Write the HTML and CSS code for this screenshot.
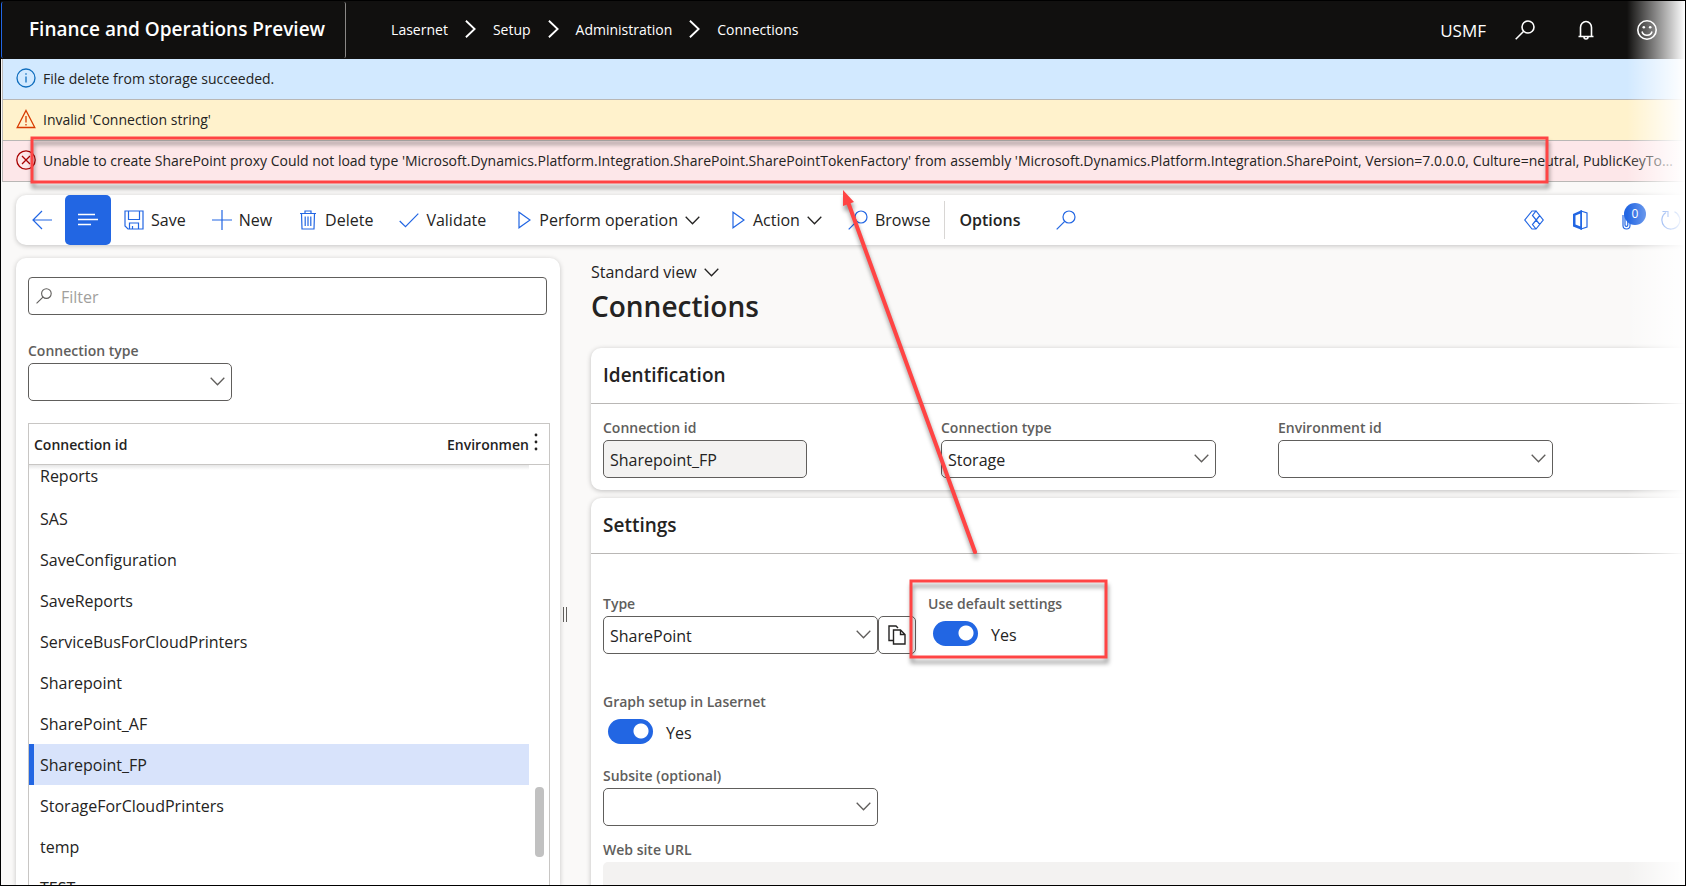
FILE: index.html
```html
<!DOCTYPE html>
<html lang="en">

<head>
    <meta charset="UTF-8">
    <meta name="viewport" content="width=device-width, initial-scale=1.0">
    <title>Connections -- Finance and Operations Preview</title>
    <link rel="stylesheet" href="styles.css">
</head>

<body>
    <!-- shared icons -->
    <svg class="icon-defs" aria-hidden="true">
        <symbol id="icon-search" viewBox="0 0 20 20">
            <circle cx="13" cy="7" r="6" />
            <path d="M8.7 11.3L0.7 19.3" />
        </symbol>
        <symbol id="icon-chevron" viewBox="0 0 15 9">
            <path d="M0.7 0.7L7.5 7.7L14.3 0.7" />
        </symbol>
        <symbol id="icon-crumb" viewBox="0 0 12 20">
            <path d="M1 1L10.5 10L1 19" />
        </symbol>
        <symbol id="icon-play" viewBox="0 0 13 18">
            <path d="M1 1.2V16.8L12 9Z" />
        </symbol>
    </svg>

    <div class="app">
        <header class="top-bar">
            <div class="app-name">Finance and Operations Preview</div>
            <nav class="breadcrumb">
                <a href="#">Lasernet</a>
                <svg class="crumb-arrow"><use href="#icon-crumb" /></svg>
                <a href="#">Setup</a>
                <svg class="crumb-arrow"><use href="#icon-crumb" /></svg>
                <a href="#">Administration</a>
                <svg class="crumb-arrow"><use href="#icon-crumb" /></svg>
                <a href="#">Connections</a>
            </nav>
            <div class="top-actions">
                <button class="company">USMF</button>
                <button aria-label="Search"><svg class="icon"><use href="#icon-search" /></svg></button>
                <button aria-label="Notifications">
                    <svg class="icon" viewBox="0 0 20 20">
                        <path d="M2.5 16.5H17.5M4.5 16.5V7.5A5.5 6 0 0 1 15.5 7.5V16.5M8 17A2 2 0 0 0 12 17" />
                    </svg>
                </button>
                <button aria-label="Feedback">
                    <svg class="icon" viewBox="0 0 20 20">
                        <circle cx="10" cy="10" r="9.2" />
                        <path d="M5 11.5A5.2 5.2 0 0 0 15 11.5" />
                        <circle class="dot" cx="6.8" cy="7.3" r="1.3" />
                        <circle class="dot" cx="13.2" cy="7.3" r="1.3" />
                    </svg>
                </button>
            </div>
        </header>

        <div class="message message-info">
            <svg class="message-icon" viewBox="0 0 20 20">
                <circle cx="10" cy="10" r="9" />
                <path d="M10 8.5V14.5M10 5.2V6.8" />
            </svg>
            <span>File delete from storage succeeded.</span>
        </div>
        <div class="message message-warning">
            <svg class="message-icon" viewBox="0 0 20 20">
                <path d="M10 1.5L18.8 18.5H1.2Z" />
                <path d="M10 7V13.5M10 15V16.6" />
            </svg>
            <span>Invalid 'Connection string'</span>
        </div>
        <div class="message message-error">
            <svg class="message-icon" viewBox="0 0 20 20">
                <circle cx="10" cy="10" r="9.2" />
                <path d="M6 6L14 14M14 6L6 14" />
            </svg>
            <span>Unable to create SharePoint proxy Could not load type 'Microsoft.Dynamics.Platform.Integration.SharePoint.SharePointTokenFactory' from assembly 'Microsoft.Dynamics.Platform.Integration.SharePoint, Version=7.0.0.0, Culture=neutral, PublicKeyToken=31bf3856ad364e35'</span>
        </div>

        <div class="action-pane">
            <button class="btn-back" aria-label="Back">
                <svg class="icon" viewBox="0 0 20 20">
                    <path d="M20 10H1M10 1L1 10L10 19" />
                </svg>
            </button>
            <button class="btn-list" aria-label="Show list">
                <svg class="icon" viewBox="0 0 20 20">
                    <path d="M0 4.5H17M0 9.5H20M0 14.5H13" />
                </svg>
            </button>
            <button class="action">
                <svg class="icon" viewBox="0 0 20 20">
                    <path d="M1 1H19V19H4L1 16ZM4.5 1V9.5H15.5V1M5.5 19V13H14.5V19M8.5 16V19" />
                </svg>
                Save
            </button>
            <button class="action">
                <svg class="icon" viewBox="0 0 20 20">
                    <path d="M10 0V20M0 10H20" />
                </svg>
                New
            </button>
            <button class="action">
                <svg class="icon" viewBox="0 0 20 20">
                    <path d="M2 3.5H18M7 3.5V1H13V3.5M3.5 3.5L4 19H16L16.5 3.5M7.2 6.5V16M10 6.5V16M12.8 6.5V16" />
                </svg>
                Delete
            </button>
            <button class="action">
                <svg class="icon" viewBox="0 0 20 20">
                    <path d="M0.7 11L6.5 16.7L19.3 3.7" />
                </svg>
                Validate
            </button>
            <button class="action">
                <svg class="icon-play"><use href="#icon-play" /></svg>
                Perform operation
                <svg class="chevron"><use href="#icon-chevron" /></svg>
            </button>
            <button class="action">
                <svg class="icon-play"><use href="#icon-play" /></svg>
                Action
                <svg class="chevron"><use href="#icon-chevron" /></svg>
            </button>
            <button class="action action-last">
                <svg class="icon"><use href="#icon-search" /></svg>
                Browse
            </button>
            <button class="action-tab">Options</button>
            <button class="btn-find" aria-label="Search actions"><svg class="icon"><use href="#icon-search" /></svg></button>
            <div class="pane-icons">
                <button aria-label="Power Apps">
                    <svg class="icon" viewBox="0 0 20 20">
                        <path d="M12 1H8L0.8 10L8 19H12L19.2 10L12 1L8.5 5.5L15.8 14.5M12 19L8.5 14.5L15.8 5.5" />
                    </svg>
                </button>
                <button aria-label="Open in Microsoft Office">
                    <svg class="icon" viewBox="0 0 20 20">
                        <path d="M11 1L17 3V17L11 19Z" />
                        <path class="fill" d="M12 0V20L3 16.5V4L12 0ZM10.5 3.5L5.5 5.5V14.5L10.5 16.5Z" />
                    </svg>
                </button>
                <button class="btn-attach" aria-label="Attachments">
                    <svg class="icon" viewBox="0 0 20 20">
                        <path d="M3 5V15.5A3.5 3.5 0 0 0 10 15.5V4A2.5 2.5 0 0 0 5 4V15A1.4 1.4 0 0 0 7.8 15V6" />
                    </svg>
                    <span class="badge">0</span>
                </button>
                <button aria-label="Refresh">
                    <svg class="icon" viewBox="0 0 20 20">
                        <path d="M13.5 1.8A9 9 0 1 1 5 2.5M1.5 1.5H7V7" />
                    </svg>
                </button>
            </div>
        </div>

        <div class="workspace">
            <aside class="list-panel">
                <div class="filter-box">
                    <svg class="filter-icon"><use href="#icon-search" /></svg>
                    <input type="text" id="filter" placeholder="Filter" aria-label="Filter">
                </div>
                <div class="field field-small list-type">
                    <label for="list-type">Connection type</label>
                    <div class="select-box">
                        <select id="list-type">
                            <option></option>
                        </select>
                        <svg class="chevron"><use href="#icon-chevron" /></svg>
                    </div>
                </div>
                <div class="grid">
                    <table>
                        <thead>
                            <tr>
                                <th>Connection id</th>
                                <th class="col-env">Environment id</th>
                                <th class="col-menu">
                                    <button aria-label="Grid options">
                                        <svg viewBox="0 0 4 18">
                                            <circle cx="2" cy="2" r="1.4" />
                                            <circle cx="2" cy="9" r="1.4" />
                                            <circle cx="2" cy="16" r="1.4" />
                                        </svg>
                                    </button>
                                </th>
                            </tr>
                        </thead>
                        <tbody>
                            <tr class="row-cut"><td>Reports</td><td></td></tr>
                            <tr><td>SAS</td><td></td></tr>
                            <tr><td>SaveConfiguration</td><td></td></tr>
                            <tr><td>SaveReports</td><td></td></tr>
                            <tr><td>ServiceBusForCloudPrinters</td><td></td></tr>
                            <tr><td>Sharepoint</td><td></td></tr>
                            <tr><td>SharePoint_AF</td><td></td></tr>
                            <tr class="selected"><td>Sharepoint_FP</td><td></td></tr>
                            <tr><td>StorageForCloudPrinters</td><td></td></tr>
                            <tr><td>temp</td><td></td></tr>
                            <tr><td>TEST</td><td></td></tr>
                        </tbody>
                    </table>
                    <div class="scroll-thumb"></div>
                </div>
            </aside>

            <div class="splitter"></div>

            <main class="details">
                <button class="view-picker">
                    Standard view
                    <svg class="chevron"><use href="#icon-chevron" /></svg>
                </button>
                <h1>Connections</h1>

                <section class="card">
                    <h2>Identification</h2>
                    <div class="card-body identification">
                        <div class="field field-small">
                            <label for="connection-id">Connection id</label>
                            <input type="text" id="connection-id" value="Sharepoint_FP" readonly>
                        </div>
                        <div class="field">
                            <label for="connection-type">Connection type</label>
                            <div class="select-box">
                                <select id="connection-type">
                                    <option>Storage</option>
                                </select>
                                <svg class="chevron"><use href="#icon-chevron" /></svg>
                            </div>
                        </div>
                        <div class="field">
                            <label for="environment-id">Environment id</label>
                            <div class="select-box">
                                <select id="environment-id">
                                    <option></option>
                                </select>
                                <svg class="chevron"><use href="#icon-chevron" /></svg>
                            </div>
                        </div>
                    </div>
                </section>

                <section class="card card-settings">
                    <h2>Settings</h2>
                    <div class="card-body">
                        <div class="type-row">
                            <div class="field">
                                <label for="type">Type</label>
                                <div class="select-box">
                                    <select id="type">
                                        <option>SharePoint</option>
                                    </select>
                                    <svg class="chevron"><use href="#icon-chevron" /></svg>
                                </div>
                            </div>
                            <button class="btn-copy" aria-label="Copy">
                                <svg viewBox="0 0 18 20">
                                    <path d="M5 15.5H1V1H8L10 3" />
                                    <path d="M5.5 5H12.5L17 9.5V19H5.5ZM12.5 5V9.5H17" />
                                </svg>
                            </button>
                            <div class="field field-toggle">
                                <label for="use-default">Use default settings</label>
                                <div class="toggle-line">
                                    <input type="checkbox" role="switch" class="toggle" id="use-default" checked>
                                    <span>Yes</span>
                                </div>
                            </div>
                        </div>
                        <div class="field field-toggle graph-setup">
                            <label for="graph-setup">Graph setup in Lasernet</label>
                            <div class="toggle-line">
                                <input type="checkbox" role="switch" class="toggle" id="graph-setup" checked>
                                <span>Yes</span>
                            </div>
                        </div>
                        <div class="field subsite">
                            <label for="subsite">Subsite (optional)</label>
                            <div class="select-box">
                                <select id="subsite">
                                    <option></option>
                                </select>
                                <svg class="chevron"><use href="#icon-chevron" /></svg>
                            </div>
                        </div>
                        <div class="field field-wide">
                            <label for="site-url">Web site URL</label>
                            <input type="text" id="site-url" class="no-border" readonly>
                        </div>
                    </div>
                </section>
            </main>
        </div>

        <div class="edge-fade"></div>

        <!-- call-outs drawn over the page -->
        <svg class="callouts" aria-hidden="true">
            <rect x="31" y="137" width="1515" height="44" />
            <rect x="910" y="580" width="195" height="76" />
            <path class="shaft" d="M974 551L847 201" />
            <path class="head" d="M842 189L853 201L842 205Z" />
        </svg>
    </div>
</body>

</html>
```
FILE: styles.css
```css
* {
    box-sizing: border-box;
}

body {
    margin: 0;
    font-family: "Open Sans", "Noto Sans", sans-serif;
    font-size: 16px;
    color: #242322;
    background-color: #faf9f8;
}

button,
input,
select {
    font: inherit;
    color: inherit;
}

button {
    padding: 0;
    border: none;
    background: none;
    cursor: pointer;
}

svg {
    display: block;
    flex: none;
    fill: none;
    stroke: currentColor;
}

.icon-defs {
    position: absolute;
    width: 0;
    height: 0;
}

.icon {
    width: 20px;
    height: 20px;
}

.chevron {
    width: 15px;
    height: 9px;
    stroke-width: 1.3;
}

.app {
    position: relative;
    display: flex;
    flex-direction: column;
    height: 100vh;
    overflow: hidden;
    border: 1px solid #000;
}

/* top bar */
.top-bar {
    display: flex;
    flex: none;
    align-items: center;
    height: 58px;
    padding-right: 28px;
    background-color: #11100f;
    color: #fff;
}

.app-name {
    height: 56px;
    padding: 0 20px 0 27px;
    border-left: 1px solid #2266e3;
    border-right: 1px solid #8a8886;
    border-radius: 2px;
    font-size: 19px;
    font-weight: 600;
    line-height: 55px;
    white-space: nowrap;
}

.breadcrumb {
    display: flex;
    align-items: center;
    gap: 17px;
    padding: 0 0 2px 45px;
    font-size: 14px;
}

.breadcrumb a {
    color: #fff;
    text-decoration: none;
}

.crumb-arrow {
    width: 11px;
    height: 20px;
    stroke-width: 2;
}

.top-actions {
    display: flex;
    align-items: center;
    gap: 41px;
    margin-left: auto;
}

.top-actions .icon {
    stroke-width: 1.6;
}

.company {
    margin-right: -12px;
    font-size: 17px;
}

.dot {
    fill: currentColor;
    stroke: none;
}

/* message bars */
.message {
    display: flex;
    flex: none;
    align-items: center;
    gap: 7px;
    height: 41px;
    margin-left: 1px;
    padding: 0 10px 2px 13px;
    border-left: 1px solid #bdbbb9;
    border-bottom: 1px solid #b9b7b5;
    font-size: 14px;
}

.message span {
    overflow: hidden;
    text-overflow: ellipsis;
    white-space: nowrap;
}

.message-icon {
    width: 20px;
    height: 20px;
    stroke-width: 1.3;
}

.message-info {
    background-color: #d2e9ff;
}

.message-info svg {
    color: #106ebe;
}

.message-warning {
    background-color: #fff2cc;
}

.message-warning svg {
    color: #d83b01;
}

.message-error {
    background-color: #fde7e9;
}

.message-error svg {
    color: #a80000;
}

/* action pane */
.action-pane {
    display: flex;
    flex: none;
    align-items: center;
    height: 50px;
    margin: 13px 0 13px 15px;
    padding-left: 16px;
    border-radius: 10px 0 0 10px;
    background-color: #fff;
    box-shadow: 0 1px 5px rgba(0, 0, 0, 0.22);
}

.action-pane .icon,
.icon-play {
    color: #2266e3;
    stroke-width: 1.2;
}

.icon-play {
    width: 13px;
    height: 18px;
    margin: 0 1px 0 6px;
}

.action-pane .btn-list {
    display: flex;
    align-items: center;
    justify-content: center;
    width: 46px;
    height: 50px;
    margin: 0 13px;
    border-radius: 5px;
    background-color: #2266e3;
}

.action-pane .btn-list .icon {
    color: #fff;
    stroke-width: 1.6;
}

.action {
    display: flex;
    align-items: center;
    gap: 7px;
    margin-right: 26px;
    white-space: nowrap;
}

.action-last {
    margin-right: 0;
}

.action-tab {
    height: 38px;
    margin-left: 14px;
    padding-left: 14px;
    border-left: 1px solid #d8d6d4;
    font-weight: 600;
}

.btn-find {
    margin-left: 36px;
}

.pane-icons {
    display: flex;
    gap: 26px;
    margin-left: auto;
    padding-right: 4px;
}

.fill {
    fill: currentColor;
    fill-rule: evenodd;
    stroke: none;
}

.btn-attach {
    position: relative;
    margin: 0 -5px 0 4px;
}

.badge {
    position: absolute;
    top: -7px;
    left: 4px;
    width: 22px;
    height: 22px;
    border-radius: 11px;
    background-color: #2266e3;
    color: #fff;
    font-size: 12px;
    line-height: 22px;
}

/* workspace */
.workspace {
    display: flex;
    flex: 1;
    min-height: 0;
    margin-left: 15px;
}

.list-panel {
    display: flex;
    flex-direction: column;
    width: 544px;
    padding: 19px 10px 0 12px;
    border-radius: 10px 10px 0 0;
    background-color: #fff;
    box-shadow: 0 1px 5px rgba(0, 0, 0, 0.22);
}

.filter-box {
    display: flex;
    align-items: center;
    height: 38px;
    margin-right: 3px;
    padding-left: 7px;
    border: 1px solid #605e5c;
    border-radius: 4px;
}

.filter-icon {
    width: 16px;
    height: 16px;
    stroke-width: 1.4;
    color: #605e5c;
}

.filter-box input {
    flex: 1;
    margin-left: 9px;
    padding: 2px 0 0;
    border: none;
    outline: none;
}

.filter-box input::placeholder {
    color: #a19f9d;
}

.field {
    display: flex;
    flex-direction: column;
    gap: 2px;
    width: 275px;
}

.field-small {
    width: 204px;
}

.field-wide {
    width: auto;
}

.field label {
    color: #605e5c;
    font-size: 14px;
    font-weight: 600;
    line-height: 20px;
}

.field input[type="text"],
.field select {
    width: 100%;
    height: 38px;
    padding: 1px 6px 0;
    border: 1px solid #605e5c;
    border-radius: 5px;
    background-color: #fff;
    appearance: none;
}

.field input[readonly] {
    background-color: #f3f2f1;
}

.field input.no-border {
    border: none;
}

.select-box {
    position: relative;
}

.select-box .chevron {
    position: absolute;
    top: 14px;
    right: 7px;
    color: #605e5c;
    pointer-events: none;
}

.list-type {
    margin: 26px 0 22px;
}

/* connections grid */
.grid {
    position: relative;
    flex: 1;
    min-height: 0;
    overflow: hidden;
    border: 1px solid #c8c6c4;
    border-bottom: none;
}

table {
    width: 100%;
    border-collapse: collapse;
    table-layout: fixed;
}

thead {
    border-bottom: 1px solid #c8c6c4;
}

th {
    height: 40px;
    padding: 1px 0 0 5px;
    overflow: hidden;
    font-size: 14px;
    font-weight: 600;
    text-align: left;
    white-space: nowrap;
}

th.col-env {
    width: 87px;
}

th.col-menu {
    width: 20px;
}

.col-menu svg {
    width: 4px;
    height: 18px;
    fill: currentColor;
    stroke: none;
}

td {
    height: 41px;
    padding: 0 0 0 11px;
}

/* first visible row, partly scrolled under the header */
.row-cut td {
    height: 34px;
    padding-bottom: 11px;
    background: linear-gradient(rgba(0, 0, 0, 0.1), rgba(0, 0, 0, 0)) no-repeat 0 0 / 100% 5px;
}

.selected td {
    background-color: #d8e3fb;
}

.selected td:first-child {
    box-shadow: inset 5px 0 #2266e3;
}

.scroll-thumb {
    position: absolute;
    top: 363px;
    right: 5px;
    width: 9px;
    height: 70px;
    border-radius: 4px;
    background-color: #c1c1c1;
}

.splitter {
    align-self: flex-start;
    width: 4px;
    height: 15px;
    margin: 349px 24px 0 3px;
    border: solid #605e5c;
    border-width: 0 1px;
}

/* details */
.details {
    display: flex;
    flex: 1;
    flex-direction: column;
    min-width: 0;
}

.view-picker {
    display: flex;
    align-items: center;
    gap: 7px;
    line-height: 28px;
}

h1 {
    margin: 0 0 21px;
    font-size: 28px;
    font-weight: 600;
    line-height: 41px;
}

.card {
    margin-bottom: 8px;
    border-radius: 10px 0 0 10px;
    background-color: #fff;
    box-shadow: 0 1px 5px rgba(0, 0, 0, 0.24);
}

.card-settings {
    flex: 1;
    margin-bottom: 0;
}

h2 {
    margin: 0;
    padding-left: 12px;
    border-bottom: 1px solid #b9b7b5;
    font-size: 19px;
    font-weight: 600;
    line-height: 55px;
}

.card-body {
    padding-left: 12px;
}

.identification {
    display: flex;
    padding-top: 14px;
    padding-bottom: 12px;
}

.identification .field {
    margin-right: 62px;
}

.identification .field-small {
    margin-right: 134px;
}

.type-row {
    display: flex;
    align-items: flex-end;
    padding-top: 40px;
}

.btn-copy {
    display: flex;
    align-items: center;
    justify-content: center;
    width: 38px;
    height: 38px;
    border: 1px solid #605e5c;
    border-radius: 5px;
}

.btn-copy svg {
    width: 18px;
    height: 20px;
    stroke-width: 1.4;
}

.type-row .field-toggle {
    margin-left: 12px;
}

.toggle-line {
    display: flex;
    align-items: center;
    gap: 13px;
    height: 38px;
    padding-left: 5px;
}

.toggle {
    width: 45px;
    height: 25px;
    margin: 0 0 4px;
    border-radius: 13px;
    background: radial-gradient(circle at 33px 12px, #fff 7px, #2266e3 8px);
    appearance: none;
}

.graph-setup {
    margin-top: 38px;
}

.subsite {
    margin: 14px 0;
}

/* page edge fades out to white */
.edge-fade {
    position: absolute;
    top: 0;
    right: 0;
    bottom: 0;
    width: 58px;
    background: linear-gradient(to right, rgba(255, 255, 255, 0), #fff);
    pointer-events: none;
}

.callouts {
    position: absolute;
    top: 0;
    left: 0;
    width: 100%;
    height: 100%;
    stroke: #ff4444;
    stroke-width: 3;
    filter: drop-shadow(1px 5px 2px rgba(0, 0, 0, 0.4));
    pointer-events: none;
}

.shaft {
    stroke-width: 4;
    stroke-linecap: round;
}

.head {
    fill: #ff4444;
    stroke: none;
}
```
